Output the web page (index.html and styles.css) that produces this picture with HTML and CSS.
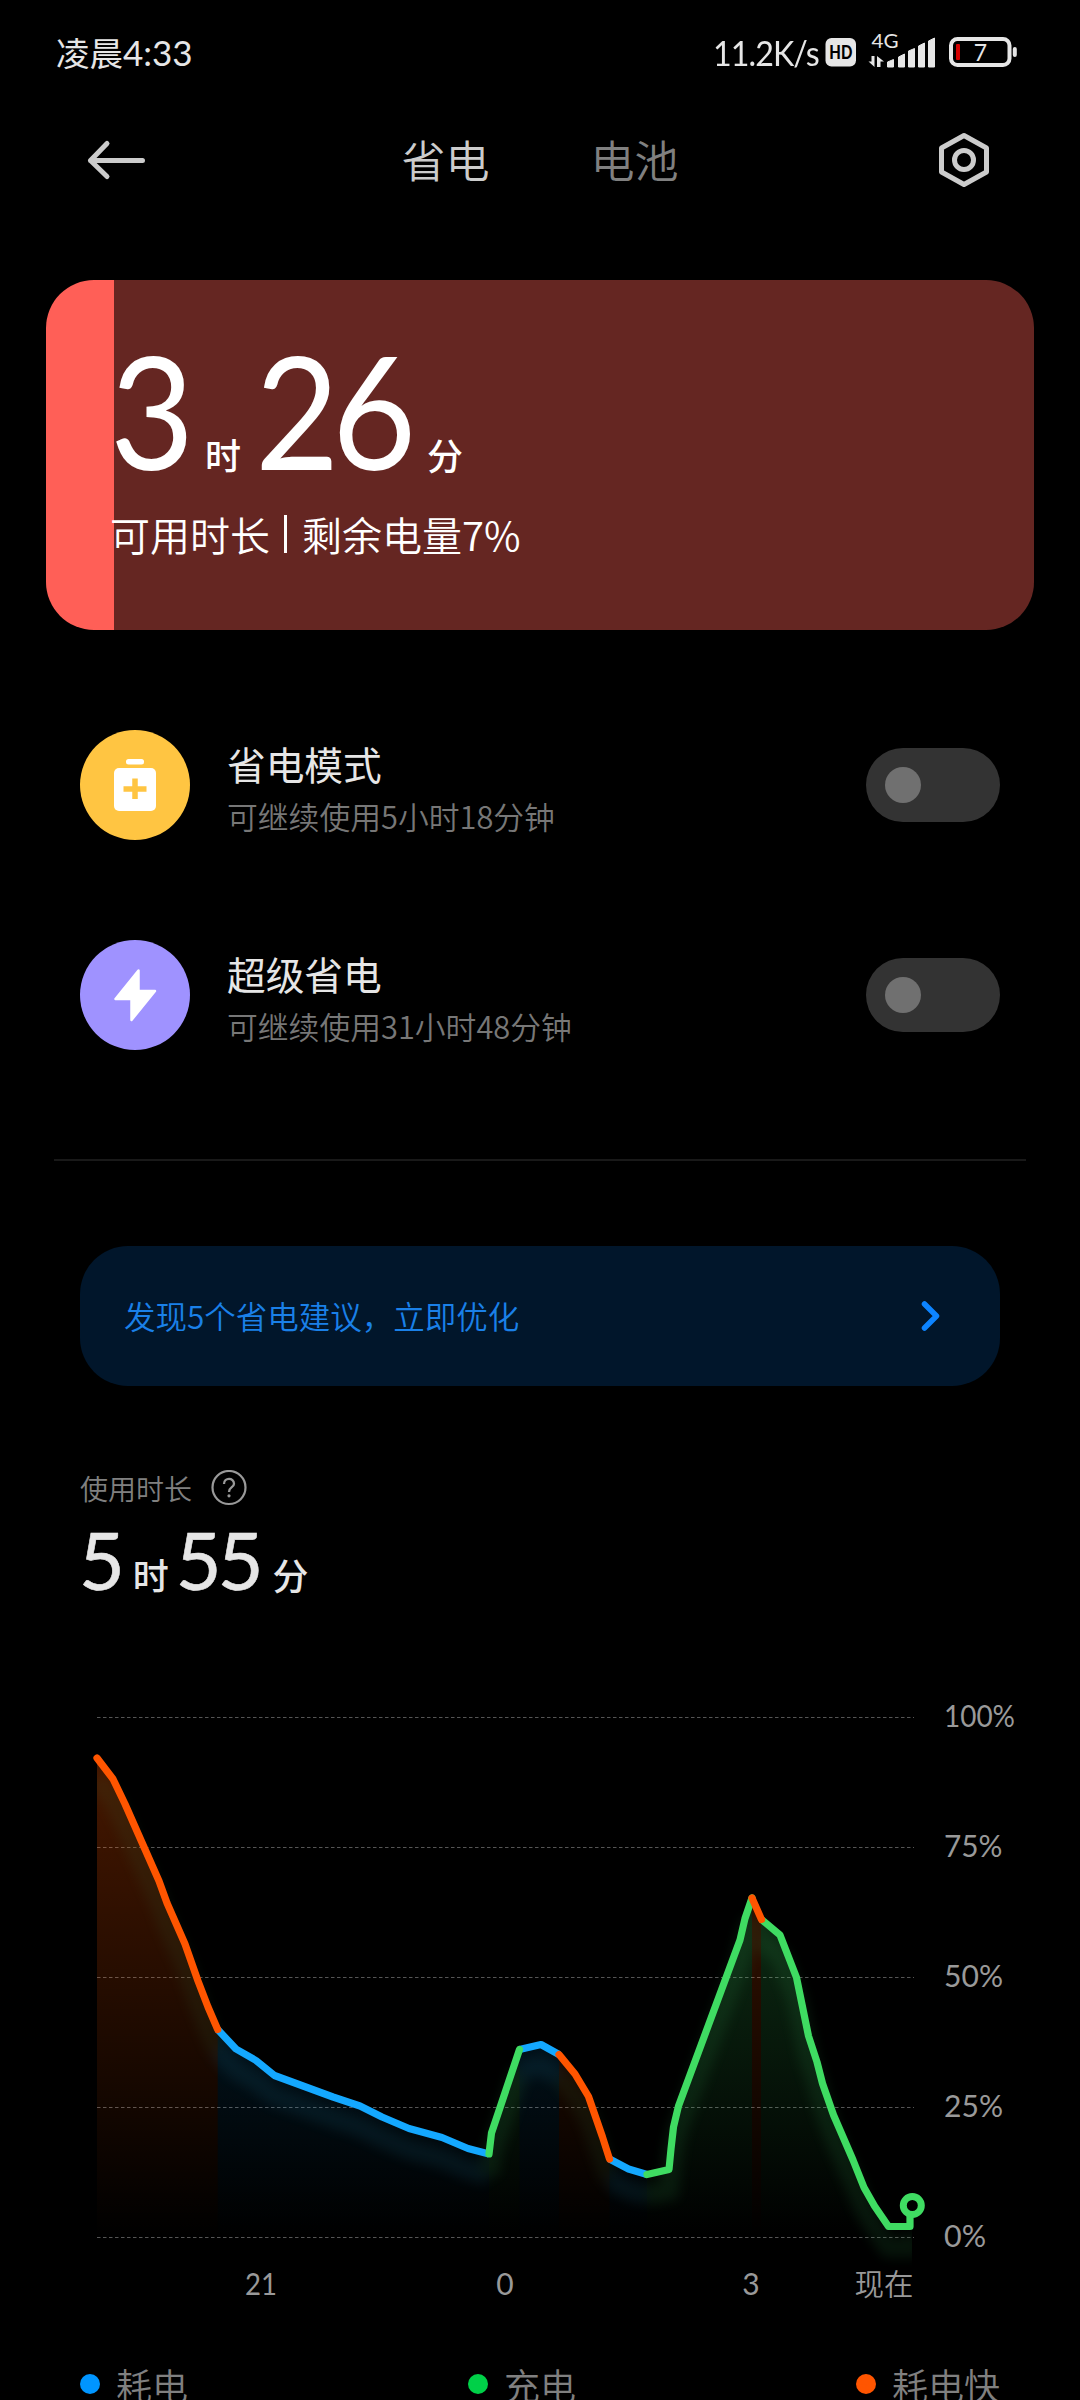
FILE: index.html
```
<!DOCTYPE html>
<html lang="zh-CN">
<head>
<meta charset="utf-8">
<title>省电与电池</title>
<link rel="stylesheet" href="styles.css">
</head>
<body>
<div class="screen">
  <div class="status">
    <span class="status-time">凌晨<span class="num">4:33</span></span>
    <div class="status-right">
      <span class="speed num">11.2K/s</span>
      <svg class="status-icons" width="195" height="52" viewBox="824 20 195 52">
        <rect x="825.5" y="38" width="30.500" height="28.500" rx="6" fill="#e6e6e6"/>
        <text x="840.800" y="58.500" class="hd" text-anchor="middle" textLength="23" lengthAdjust="spacingAndGlyphs">HD</text>
        <text x="871.500" y="48" class="net" textLength="27" lengthAdjust="spacingAndGlyphs">4G</text>
        <path d="M874.500 56V67L868.500 61.500H871.500V56ZM877 67V56L884 61.500H880.500V67Z" fill="#e6e6e6"/>
        <path d="M887.500 67V62L893.500 59.500V67ZM898.500 67V57L904.500 54V67ZM908.500 67V51L914.500 48.500V67ZM918.500 67V46L924.500 43V67ZM928.500 67V41L934.500 38V67Z" fill="#e6e6e6" stroke="#e6e6e6" stroke-width="1" stroke-linejoin="round"/>
        <rect x="951" y="39" width="58.500" height="26" rx="6.500" fill="none" stroke="#e6e6e6" stroke-width="4"/>
        <rect x="956" y="44" width="4" height="16" rx="1" fill="#d40000"/>
        <rect x="1012.800" y="47" width="4" height="10" rx="2" fill="#e6e6e6"/>
        <text x="980.500" y="60.500" class="level" text-anchor="middle">7</text>
      </svg>
    </div>
  </div>

  <div class="header">
    <svg class="back" width="62" height="48" viewBox="0 0 62 48"><path d="M21 7.500 4.500 24.500 21 40.500M4.500 24.500H56.500" fill="none" stroke="#ccc" stroke-width="5" stroke-linecap="round" stroke-linejoin="round"/></svg>
    <div class="tabs"><span class="tab active">省电</span><span class="tab">电池</span></div>
    <svg class="gear" width="60" height="60" viewBox="0 0 60 60"><path d="M30 5.500 52.500 18V42L30 54.500 7.500 42V18Z" fill="none" stroke="#ccc" stroke-width="5" stroke-linejoin="round"/><circle cx="30" cy="30" r="9.500" fill="none" stroke="#ccc" stroke-width="5"/></svg>
  </div>

  <div class="hero">
    <div class="hero-time"><span class="big b1">3</span><span class="unit u1">时</span><span class="big b2">26</span><span class="unit u2">分</span></div>
    <div class="hero-sub">可用时长<i class="bar"></i>剩余电量7%</div>
  </div>

  <div class="row first">
    <svg class="icon" width="110" height="110" viewBox="0 0 110 110"><circle cx="55" cy="55" r="55" fill="#ffc542"/><rect x="46" y="29" width="18" height="5.500" rx="2.500" fill="#fff"/><rect x="34" y="38" width="42" height="43" rx="5" fill="#fff"/><path d="M55 48.500V69M43.500 59H66.500" stroke="#ffc542" stroke-width="5.500"/></svg>
    <div class="row-text"><div class="title">省电模式</div><div class="sub">可继续使用5小时18分钟</div></div>
    <span class="toggle"></span>
  </div>
  <div class="row">
    <svg class="icon" width="110" height="110" viewBox="0 0 110 110"><circle cx="55" cy="55" r="55" fill="#9f92ff"/><path d="M58.500 30.500V51H75L51.500 80V59H35.500Z" fill="#fff" stroke="#fff" stroke-width="2.500" stroke-linejoin="round"/></svg>
    <div class="row-text"><div class="title">超级省电</div><div class="sub">可继续使用31小时48分钟</div></div>
    <span class="toggle"></span>
  </div>

  <div class="divider"></div>

  <div class="suggest"><span class="suggest-text">发现5个省电建议，立即优化</span>
    <svg width="24" height="34" viewBox="0 0 24 34"><path d="M5.500 5 17.500 17 5.500 29" fill="none" stroke="#0d84ff" stroke-width="5.500" stroke-linecap="round" stroke-linejoin="round"/></svg>
  </div>

  <div class="usage-label"><span>使用时长</span>
    <svg width="36" height="36" viewBox="0 0 36 36"><circle cx="18" cy="17.500" r="16.500" fill="none" stroke="#999" stroke-width="2.200"/><path d="M13 14C13 7.300 23 7.300 23 13.700C23 17.500 18 17 18 22" fill="none" stroke="#999" stroke-width="2.300"/><circle cx="18" cy="25.800" r="1.600" fill="#999"/></svg>
  </div>
  <div class="usage-time"><span class="mid m1">5</span><span class="unit v1">时</span><span class="mid m2">55</span><span class="unit v2">分</span></div>

  <svg class="chart" width="1080" height="660" viewBox="0 1680 1080 660">
    <defs>
      <linearGradient id="go" gradientUnits="userSpaceOnUse" x1="0" y1="1717" x2="0" y2="2237"><stop stop-color="#ff5500" stop-opacity=".3"/><stop offset="1" stop-color="#ff5500" stop-opacity="0"/></linearGradient>
      <linearGradient id="gb" gradientUnits="userSpaceOnUse" x1="0" y1="1717" x2="0" y2="2237"><stop stop-color="#14a8ff" stop-opacity=".26"/><stop offset="1" stop-color="#14a8ff" stop-opacity="0"/></linearGradient>
      <linearGradient id="gg" gradientUnits="userSpaceOnUse" x1="0" y1="1717" x2="0" y2="2237"><stop stop-color="#3fdc62" stop-opacity=".3"/><stop offset="1" stop-color="#3fdc62" stop-opacity="0"/></linearGradient>
      <filter id="soft" filterUnits="userSpaceOnUse" x="60" y="1700" width="900" height="620"><feGaussianBlur stdDeviation="6"/></filter>
      <clipPath id="plot"><rect x="97" y="1700" width="815" height="640"/></clipPath>
      <path id="o1" d="M97 1758 113 1779 125 1804 140 1838 159 1881 167 1903 185 1944 198 1981 208 2007 217.700 2029.500"/>
      <path id="b1" d="M217.700 2029.500 236 2049 256 2060.500 274.500 2075.500 333 2097 360 2106 382 2117 409 2128.500 442 2137.500 468 2148.500 489 2154"/>
      <path id="g1" d="M489 2154 491.500 2133 519.500 2049.500"/>
      <path id="b2" d="M519.500 2049.500 541 2044.500 559 2054.500"/>
      <path id="o2" d="M559 2054.500 575 2074 588.500 2096.500 602.500 2137 609.500 2159"/>
      <path id="b3" d="M609.500 2159 628.500 2169 647 2174.500"/>
      <path id="g2" d="M647 2174.500 669 2169.500 671 2149 673.500 2127 678.500 2106 740 1940 745 1918.500 752 1898"/>
      <path id="o3" d="M752 1898 761.500 1919.500"/>
      <path id="g3" d="M761.500 1919.500 780 1935 796.500 1977.500 808.500 2036 817 2062 822.500 2083.500 833.500 2115 853 2160 864 2187.500 874.500 2206 888.500 2226.500H910V2213"/>
    </defs>
    <path class="grid" d="M97 1717.500H914M97 1847.500H914M97 1977.500H914M97 2107.500H914M97 2237.500H914"/>
    <path fill="url(#go)" d="M97 1758 113 1779 125 1804 140 1838 159 1881 167 1903 185 1944 198 1981 208 2007 217.700 2029.500V2237H97ZM559 2054.500 575 2074 588.500 2096.500 602.500 2137 609.500 2159V2237H559ZM752 1898 761 1919.500V2237H752Z"/>
    <path fill="url(#gb)" d="M217.700 2029.500 236 2049 256 2060.500 274.500 2075.500 333 2097 360 2106 382 2117 409 2128.500 442 2137.500 468 2148.500 489 2154V2237H217.700ZM519.500 2049.500 541 2044.500 559 2054.500V2237H519.500ZM609.500 2159 628.500 2169 647 2174.500V2237H609.500Z"/>
    <path fill="url(#gg)" d="M489 2154 491.500 2133 519.500 2049.500V2237H489ZM647 2174.500 669 2169.500 671 2149 673.500 2127 678.500 2106 740 1940 745 1918.500 752 1898V2237H647ZM761 1919.500 780 1935 796.500 1977.500 808.500 2036 817 2062 822.500 2083.500 833.500 2115 853 2160 864 2187.500 874.500 2206 888.500 2226.500H912V2237H761Z"/>
    <g clip-path="url(#plot)"><g class="glow" filter="url(#soft)" transform="translate(0 21)">
      <use href="#o1" stroke="#35703a"/><use href="#b1" stroke="#2080a0"/><use href="#g1" stroke="#38a858"/><use href="#b2" stroke="#2080a0"/><use href="#o2" stroke="#35703a"/><use href="#b3" stroke="#2080a0"/><use href="#g2" stroke="#38a858"/><use href="#o3" stroke="#35703a"/><use href="#g3" stroke="#38a858"/>
    </g></g>
    <g class="line">
      <use href="#b1" stroke="#14a8ff"/><use href="#b2" stroke="#14a8ff"/><use href="#b3" stroke="#14a8ff"/>
      <use href="#g1" stroke="#3fdc62" stroke-linecap="round"/><use href="#g2" stroke="#3fdc62" stroke-linecap="round"/><use href="#g3" stroke="#3fdc62"/>
      <use href="#o1" stroke="#ff5500" stroke-linecap="round"/><use href="#o2" stroke="#ff5500" stroke-linecap="round"/><use href="#o3" stroke="#ff5500" stroke-linecap="round"/>
    </g>
    <circle cx="912.300" cy="2205.500" r="9" fill="#000" stroke="#3fdc62" stroke-width="7"/>
    <g class="axis">
      <text x="944" y="1726.500" textLength="71" lengthAdjust="spacingAndGlyphs">100%</text>
      <text x="944" y="1856.500" textLength="58.500" lengthAdjust="spacingAndGlyphs">75%</text>
      <text x="944" y="1986.500" textLength="59" lengthAdjust="spacingAndGlyphs">50%</text>
      <text x="944" y="2116.500" textLength="59" lengthAdjust="spacingAndGlyphs">25%</text>
      <text x="944" y="2246.500" textLength="42" lengthAdjust="spacingAndGlyphs">0%</text>
      <text x="245" y="2294.500" textLength="32" lengthAdjust="spacingAndGlyphs">21</text>
      <text x="505" y="2294.500" text-anchor="middle">0</text>
      <text x="751" y="2294.500" text-anchor="middle">3</text>
      <text x="854.500" y="2294.500" class="now">现在</text>
    </g>
  </svg>

  <div class="legend">
    <span class="key"><i class="dot blue"></i>耗电</span>
    <span class="key"><i class="dot green"></i>充电</span>
    <span class="key"><i class="dot orange"></i>耗电快</span>
  </div>
</div>
</body>
</html>
```
FILE: styles.css
```
* { box-sizing: border-box; }
body { margin: 0; background: #000; }
.screen {
  width: 1080px; height: 2400px; overflow: hidden;
  background: #000; color: #e6e6e6;
  font-family: "Noto Sans CJK SC", sans-serif; font-weight: 350;
}
svg { display: block; flex: none; }
.num { font-family: Lato, "Noto Sans CJK SC", sans-serif; font-weight: 400; }

.status { height: 106px; padding: 0 61px 0 56px; display: flex; justify-content: space-between; }
.status-time { height: 104px; line-height: 104px; font-size: 33.500px; font-weight: 400; }
.status-time .num { font-size: 35px; }
.status-right { display: flex; padding-top: 20px; }
.speed { margin-top: 12px; line-height: 40px; font-size: 35px; width: 111px; letter-spacing: -1px; transform: scaleX(.92); transform-origin: 0 0; }
.hd { font: 900 18px Lato, sans-serif; fill: #000; }
.net { font: 400 20px Lato, sans-serif; fill: #e6e6e6; }
.level { font: 400 23px Lato, sans-serif; fill: #e6e6e6; }

.header { height: 174px; padding: 24px 86px 0 86px; display: flex; justify-content: space-between; align-items: flex-start; }
.back { margin-top: 6px; }
.tabs { display: flex; gap: 101px; margin-left: -2px; font-size: 44px; line-height: 58px; }
.tab { color: #808080; }
.tab.active { color: #ccc; }

.hero {
  width: 988px; height: 350px; margin: 0 46px; padding: 49px 0 0 64px;
  border-radius: 48px; color: #fff;
  background: linear-gradient(90deg, #ff5f57 68px, #652622 68px);
}
.hero-time { display: flex; height: 176px; align-items: baseline; }
.big { font: 400 158px/160px Lato, sans-serif; letter-spacing: -8px; transform: scaleX(.92); transform-origin: 0 0; }
.unit { font-size: 36px; font-weight: 500; line-height: 40px; }
.b1 { width: 95px; }
.b2 { width: 172px; margin-left: 14px; }
.hero-sub { display: flex; align-items: center; height: 50px; font-size: 40px; line-height: 50px; margin-top: 4px; white-space: nowrap; }
.bar { width: 3px; height: 38px; margin: 0 15px 0 14px; background: #fff; }

.row { height: 110px; margin: 0 80px; display: flex; align-items: center; }
.row.first { margin-top: 100px; margin-bottom: 100px; }
.row-text { flex: 1; margin-left: 37px; padding-top: 10px; }
.title { font-size: 38.700px; line-height: 52px; font-weight: 400; }
.sub { font-size: 30.800px; line-height: 54px; color: #777; }
.toggle { width: 134px; height: 74px; border-radius: 37px; background: #333; padding: 19px; }
.toggle::before { content: ""; display: block; width: 36px; height: 36px; border-radius: 50%; background: #707070; }

.divider { height: 2px; margin: 109px 54px 0; background: #191919; }

.suggest {
  height: 140px; margin: 85px 80px 0; padding: 0 57px 0 44px;
  display: flex; align-items: center; justify-content: space-between;
  border-radius: 48px; background: #01162b; color: #1a80e8; font-size: 31.500px;
}
.suggest-text { margin-top: -2px; }

.usage-label { height: 36px; margin: 84px 80px 0; display: flex; align-items: center; gap: 19px; font-size: 28px; line-height: 36px; color: #808080; }
.usage-time { height: 90px; margin: 9px 80px 0 79px; display: flex; align-items: baseline; }
.mid { font: 400 79px/90px Lato, sans-serif; letter-spacing: -4px; -webkit-text-stroke: .6px #e6e6e6; }
.v1 { margin-left: 12px; }
.m2 { margin-left: 7px; }
.v2 { margin-left: 13px; }

.chart { margin-top: 75px; }
.grid { fill: none; stroke: #555; stroke-width: 1; stroke-dasharray: 3.500 2.500; }
.glow { fill: none; stroke-width: 20px; opacity: .12; }
.line { fill: none; stroke-width: 7.200px; stroke-linejoin: round; }
.axis { font: 400 30px Lato, "Noto Sans CJK SC", sans-serif; fill: #999; }
.now { font: 350 29.500px "Noto Sans CJK SC", sans-serif; }

.legend { height: 60px; margin: 14px 80px 0; display: flex; justify-content: space-between; font-size: 36px; line-height: 54px; color: #808080; }
.key { display: flex; align-items: center; }
.dot { width: 20px; height: 20px; border-radius: 50%; margin-right: 16px; }
.blue { background: #0095ff; }
.green { background: #00d048; }
.orange { background: #ff5500; }
```
